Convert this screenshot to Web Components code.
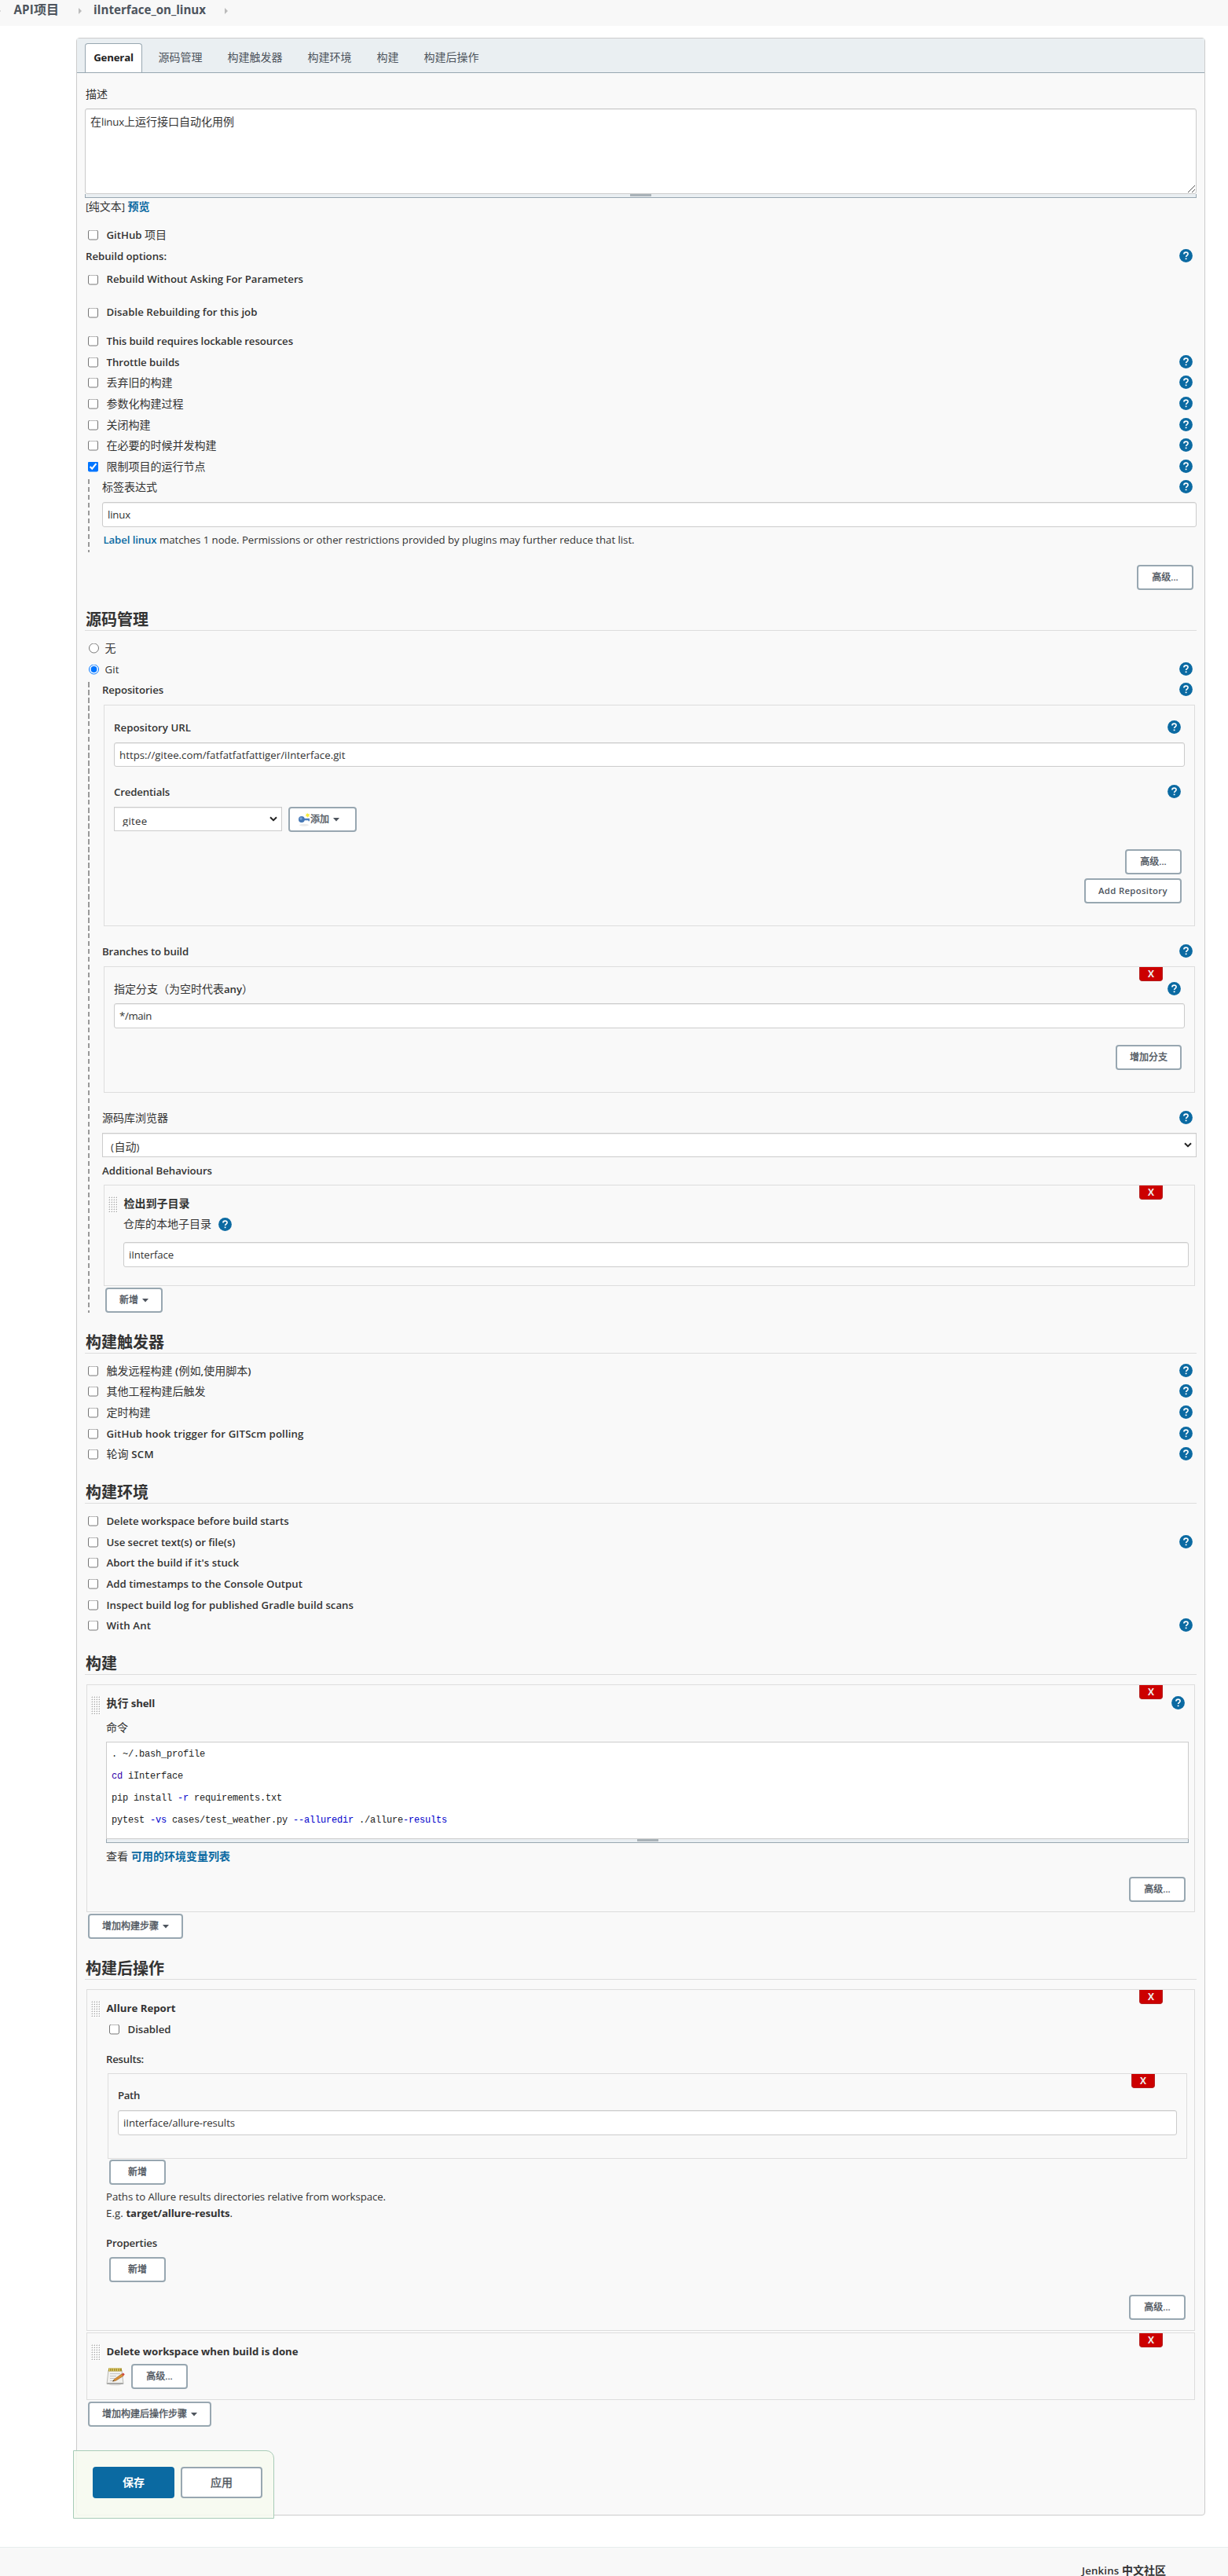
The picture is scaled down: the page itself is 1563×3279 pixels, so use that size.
<!DOCTYPE html>
<html lang="zh-CN">
<head>
<meta charset="utf-8">
<title>iInterface_on_linux Config</title>
<style>
html,body{margin:0;padding:0;background:#fff}
body{width:1563px;height:3279px;overflow:hidden;color:#333;font-family:"Open Sans","Noto Sans CJK SC",sans-serif;font-size:14px;line-height:20px}
</style>
</head>
<body>
<job-config></job-config>
<script>
const define = (name, css, html, init) => customElements.define(name, class extends HTMLElement {
  connectedCallback() {
    if (this.shadowRoot) return;
    const mt = this.getAttribute('mt'), h = this.getAttribute('h'), wd = this.getAttribute('wd');
    if (mt) this.style.marginTop = mt + 'px';
    if (h) this.style.height = h + 'px';
    if (wd) this.style.width = wd + 'px';
    const root = this.attachShadow({ mode: 'open' });
    root.innerHTML = `<style>*{box-sizing:border-box}:host{box-sizing:border-box}${css}</style>` +
      (typeof html === 'function' ? html(this) : html);
    if (init) init(this, root);
  }
});
const at = (e, n, d = '') => e.hasAttribute(n) ? e.getAttribute(n) : d;

/* Text run: Latin and CJK parts are set separately; w is the width of the whole run. */
define('t-x',
  `:host{display:inline-block;white-space:pre;flex:none;line-height:20px;margin-top:-1.5px}
   .l{font-size:var(--ls,13.2px);font-weight:400}
   .c{font-size:var(--cs,14px);font-weight:400}
   :host([semi]) .l{font-weight:600}
   :host([bold]) .l{font-weight:700}
   :host([bold]) .c,:host([cb]) .c{font-weight:700}
   :host([med]) .c{-webkit-text-stroke:.35px currentColor}
   :host([blue]){color:#0b6aa2}`,
  e => at(e, 's').split(/([\u3000-\u9fff\uff00-\uffef]+)/).filter(Boolean)
        .map(p => `<span class="${/[\u3000-\u9fff\uff00-\uffef]/.test(p) ? 'c' : 'l'}">${p}</span>`).join(''),
  (e, root) => {
    const z = +at(e, 'z', 14);
    e.style.setProperty('--cs', z + 'px');
    e.style.setProperty('--ls', (z * .945).toFixed(2) + 'px');
    const w = +at(e, 'w', 0);
    if (!w) return;
    let spans = [...root.querySelectorAll('.l')];
    if (!spans.length) spans = [...root.querySelectorAll('.c')];
    const n = spans.reduce((a, s) => a + s.textContent.length, 0);
    const ls = (w - e.getBoundingClientRect().width) / n;
    spans.forEach(s => s.style.letterSpacing = ls.toFixed(3) + 'px');
  });

define('help-icon', `:host{display:block;width:17px;height:17px;flex:none}svg{display:block}`,
  `<svg width="17" height="17" viewBox="0 0 17 17"><circle cx="8.5" cy="8.5" r="8.4" fill="#0b6aa2"/><path d="M5.9 6.6C5.9 4.9 7 4.1 8.5 4.1s2.6.9 2.6 2.2c0 1.7-2.5 1.9-2.5 3.8" fill="none" stroke="#fff" stroke-width="1.6"/><rect x="7.7" y="11.5" width="1.8" height="1.7" fill="#fff"/></svg>`);

define('j-row', `:host{display:flex;align-items:center;height:20px;white-space:pre}
  help-icon{margin-left:auto;margin-right:5.5px;margin-top:-2.5px}`,
  e => `<slot></slot>${e.hasAttribute('help') ? '<help-icon></help-icon>' : ''}`);

define('j-check', `:host{display:flex;align-items:center;height:20px}
  input{margin:0 0 0 4px;width:13px;height:13px;flex:none;transform:translateY(-1.5px)}
  :host([even]) input{transform:translateY(-.5px)}
  t-x{margin-left:10.5px}:host([radio]) t-x{margin-left:7.5px}
  :host([radio]) input{margin-left:5px}
  help-icon{margin-left:auto;margin-right:5.5px;margin-top:-2.5px}`,
  e => `<input type="${e.hasAttribute('radio') ? 'radio' : 'checkbox'}" ${e.hasAttribute('on') ? 'checked' : ''}><t-x ${e.hasAttribute('plain') ? '' : 'semi'} s="${at(e, 's')}" w="${at(e, 'w')}"></t-x>${e.hasAttribute('help') ? '<help-icon></help-icon>' : ''}`);

define('j-input', `:host{display:flex;align-items:center;height:32px;background:#fff;border:1px solid #ccc;border-radius:3px;box-shadow:inset 0 1px 1px rgba(0,0,0,.075);padding:2px 0 0 6px}`,
  e => `<t-x s="${at(e, 's')}" w="${at(e, 'w')}"></t-x>`);

define('j-select', `:host{display:flex;align-items:flex-start;justify-content:space-between;height:31px;background:#fff;border:1px solid #ccc;box-shadow:inset 0 1px 1px rgba(0,0,0,.075);padding:0 5px 0 10px}
  div{margin-top:7px;display:flex;align-items:flex-start;overflow:hidden}t-x{margin-top:0}svg{margin-top:11px}`,
  e => `<div style="height:${at(e, 'clip', 22)}px"><t-x s="${at(e, 's')}" w="${at(e, 'w')}"></t-x></div><svg width="10" height="7" viewBox="0 0 10 7"><path d="M1 1.2 5 5.2 9 1.2" fill="none" stroke="#222" stroke-width="2"/></svg>`);

define('j-btn', `:host{display:inline-flex;align-items:center;justify-content:center;height:32px;flex:none;background:#fff;border:2px solid #98a7b1;border-radius:4px;color:#4d545d}
  svg.d{margin-left:5px}:host([icon]){padding-right:9px}svg{flex:none}t-x{margin-top:-.5px}
  :host([primary]){background:#0b6aa2;border-color:#0b6aa2;color:#fff}`,
  e => (e.hasAttribute('icon') ? `<svg width="15" height="20" viewBox="0 0 15 20"><ellipse cx="7" cy="17.2" rx="6" ry="1.5" fill="#eaeaea"/><path d="M6 8.7h8v3.6h-1.6v-1H6z" fill="#4f7fbe"/><circle cx="3.9" cy="10" r="3.9" fill="#4577b5"/><circle cx="3" cy="9" r="1.7" fill="#7ba3d6"/><path d="M11.3 1.6l1 1.7 1.9-.3-1 1.7.9 1.8-1.9-.3-1 1.6-.8-1.8-1.8-.2 1.3-1.4-.6-1.8 1.9.6z" fill="#f7ec3c"/></svg>` : '') +
    `<t-x ${e.hasAttribute('primary') ? 'bold' : 'semi med'} z="${at(e, 'z', 12)}" s="${at(e, 's')}" w="${at(e, 'w')}"></t-x>` +
    (e.hasAttribute('drop') ? '<svg class="d" width="8" height="5" viewBox="0 0 8 5"><path d="M0 0h8L4 4.6z" fill="#4d545d"/></svg>' : ''));

define('j-btns', `:host{display:flex;height:32px;justify-content:flex-end;padding-right:4px}`, `<slot></slot>`);

define('j-head', `:host{display:flex;align-items:center;height:29px;border-bottom:1px solid #ddd}t-x{margin-left:1px;margin-top:3.5px}`,
  e => `<t-x bold z="20" s="${at(e, 's')}"></t-x>`);

define('j-nest', `:host{display:flex;flex-direction:column;margin-left:4px;padding-left:18px;background:repeating-linear-gradient(#999 0 6.5px,transparent 6.5px 10px) 0 0/2px 100% no-repeat}`, `<slot></slot>`);

define('j-box', `:host{display:flex;flex-direction:column;position:relative;margin:0 2px;border:1px solid #ddd;padding:0 12px}
  :host([drag]){padding:0 7px 0 24px}
  b{position:absolute;right:40px;top:0;width:30px;height:18px;background:#c00;border:1px solid #b52020;border-top:0;border-radius:0 0 4px 4px;display:flex;justify-content:center;align-items:center;color:#eee;font:700 12px/17px "Open Sans",sans-serif}`,
  e => `${e.hasAttribute('del') ? '<b>X</b>' : ''}<slot></slot>`);

define('j-title', `:host{display:flex;align-items:center;height:20px}
  svg{margin:0 7.5px 0 -19px;flex:none;align-self:flex-start}
  help-icon{margin-left:auto;margin-right:5.5px;margin-top:-2.5px}`,
  e => { const h = +at(e, 'grip', 21); let d = '';
    for (let y = 0; y < h - 1; y += 3) for (let x = 0; x < 12; x += 3) d += `<path d="M${x + 1} ${y + 1}h1v1h-1z" fill="#aaa"/><path d="M${x} ${y + 1}h1v1h-1zM${x + 1} ${y}h1v1h-1z" fill="#d8d8d8"/>`;
    return `<svg width="12" height="${h}" viewBox="0 0 12 ${h}"><rect width="12" height="${h}" fill="#fff" opacity=".7"/>${d}</svg><t-x bold s="${at(e, 's')}" w="${at(e, 'w')}"></t-x>${e.hasAttribute('help') ? '<help-icon></help-icon>' : ''}`; });

define('j-area', `:host{display:flex;flex-direction:column}
  .a{flex:1;background:#fff;border:1px solid #ccc;display:flex;flex-direction:column;align-items:flex-start;padding:7px 6px}
  :host([round]) .a{border-radius:3px;box-shadow:inset 0 1px 1px rgba(0,0,0,.075)}
  .s{flex:1}.z{align-self:flex-end;margin:0 -5px -6px 0;display:block}
  .g{height:5px;background:#eaeff2;border:1px solid #98a7b1;border-top:0;display:flex;justify-content:center}
  .g i{width:27px;height:3px;margin-top:0;background:#a9b2b8}`,
  e => `<div class="a"><slot></slot><div class="s"></div>${e.hasAttribute('round') ? '<svg class="z" width="9" height="9" viewBox="0 0 9 9"><path d="M0 9 9 0M5 9 9 5" stroke="#555" stroke-width="1" fill="none"/></svg>' : ''}</div><div class="g"><i></i></div>`);

define('code-line', `:host{display:block;height:28px;line-height:28px;white-space:pre;font-family:"Liberation Mono",monospace;font-size:12px;letter-spacing:-.2px;color:#222}::slotted(i){font-style:normal;color:#00c}::slotted(u){text-decoration:none;color:#30a}`, `<slot></slot>`);

define('note-icon', `:host{display:block;width:24px;height:24px;margin-right:8px}`,
  `<svg width="24" height="24" viewBox="0 0 24 24"><ellipse cx="11.5" cy="22" rx="8" ry="1.6" fill="#ddd"/><path d="M3 4h17l2 17.5H1z" fill="#f1f1ef" stroke="#b9b9b5"/><path d="M1.5 20h20l.2 2H1z" fill="#a9a9a7"/><path d="M3 1.5h17v4H3z" fill="#a8922f"/><path d="M4.500 1v4M7 1v4M9.500 1v4M12 1v4M14.500 1v4M17 1v4" stroke="#e0cf72"/><path d="M5 8.500h13M5 11.500h8M5 14.500h6M5 17.500h5" stroke="#c6c6c6"/><path d="M10.500 15.500 20 8.800l2 2.500-9.500 6-4 .9z" fill="#dc9135" stroke="#94581c" stroke-width=".6"/><path d="M20 8.800l2.200-1.300 1.500 2.100-1.700 1.700z" fill="#d2453e"/><path d="M8.500 18.200l1.200-1.600.8 1.100z" fill="#333"/></svg>`);

define('crumb-bar', `:host{display:flex;align-items:center;height:33px;background:#f8f8f8;color:#4d545d;padding-bottom:6px}
  svg{flex:none}`,
  (() => { const a = (l) => `<svg style="margin-left:${l}px" width="4" height="8" viewBox="0 0 4 8"><path d="M0 0 4 4 0 8z" fill="#bbb"/></svg>`;
    return `${a(-3)}<t-x style="margin-left:16.500px" bold z="16" s="API项目" w="57.500"></t-x>${a(25)}<t-x style="margin-left:15px" bold z="16" s="iInterface_on_linux" w="143"></t-x>${a(24)}`; })());

define('tab-bar', `:host{display:flex;height:44px;background:#eaeff2;border-bottom:1px solid #98a7b1;padding:6px 0 0 10px;color:#4d545d}
  .on{height:37px;width:73px;border:1px solid #98a7b1;border-bottom:0;border-radius:4px 4px 0 0;background:#fff;color:#222;display:flex;align-items:center;justify-content:center;margin-right:20.500px}
  .o{display:flex;align-items:center;gap:32px;height:38px}`,
  `<div class="on"><t-x bold s="General" w="50.500"></t-x></div><div class="o">${['源码管理', '构建触发器', '构建环境', '构建', '构建后操作'].map(t => `<t-x s="${t}"></t-x>`).join('')}</div>`);

define('save-bar', `:host{display:flex;position:relative;margin-left:-15px;width:256px;height:87px;background:rgba(246,249,239,.88);border:1px solid #a8ccb8;border-radius:0 10px 0 0;padding:20px 0 0 24px;gap:8px}
  j-btn{height:40px}`, `<j-btn primary z="14" wd="104" s="保存"></j-btn><j-btn z="14" wd="104" s="应用"></j-btn>`);

define('page-foot', `:host{display:flex;height:37px;margin-top:40px;background:#f8f8f8;border-top:1px solid #e6eded;justify-content:flex-end;align-items:flex-start;padding:19px 79px 0 0;overflow:hidden}t-x{margin-top:0}`,
  `<t-x semi s="Jenkins " w="51"></t-x><t-x bold s="中文社区"></t-x>`);

define('job-config', `:host{display:block}
  main{display:flex;flex-direction:column;margin:15px 0 0 97px;width:1437px;height:3154px;border:1px solid #ccc;border-radius:4px;background:#f9f9f9}
  .b{display:flex;flex-direction:column;padding:0 10px}
  .r{display:flex;height:32px}
  .left{align-self:flex-start;margin-left:4px}`,
`<crumb-bar></crumb-bar>
<main>
<tab-bar></tab-bar>
<div class="b">
  <j-row mt="18"><t-x style="margin-left:1px" s="描述"></t-x></j-row>
  <j-area round mt="7" h="114"><t-x s="在linux上运行接口自动化用例" w="183"></t-x></j-area>
  <j-row mt="2"><t-x style="margin-left:1px" s="[纯文本]" w="49.500"></t-x><t-x style="margin-left:4px" bold blue s="预览"></t-x></j-row>
  <j-check mt="16" s="GitHub 项目" w="76.500"></j-check>
  <j-row mt="7" help><t-x style="margin-left:1px" semi s="Rebuild options:" w="103"></t-x></j-row>
  <j-check mt="9" even s="Rebuild Without Asking For Parameters" w="250.500"></j-check>
  <j-check mt="22" even s="Disable Rebuilding for this job" w="192"></j-check>
  <j-check mt="17" s="This build requires lockable resources" w="237.500"></j-check>
  <j-check mt="7" help s="Throttle builds" w="93"></j-check>
  <j-check mt="6" help s="丢弃旧的构建"></j-check>
  <j-check mt="7" help s="参数化构建过程"></j-check>
  <j-check mt="7" help s="关闭构建"></j-check>
  <j-check mt="6" help s="在必要的时候并发构建"></j-check>
  <j-check mt="7" help on s="限制项目的运行节点"></j-check>
  <j-nest mt="5" h="93">
    <j-row mt="1" help><t-x s="标签表达式"></t-x></j-row>
    <j-input mt="8" s="linux" w="29"></j-input>
    <j-row mt="7"><t-x style="margin-left:1.500px" semi blue s="Label linux" w="68"></t-x><t-x s=" matches 1 node. Permissions or other restrictions provided by plugins may further reduce that list." w="608"></t-x></j-row>
  </j-nest>
  <j-btns mt="16"><j-btn wd="72" s="高级..."></j-btn></j-btns>

  <j-head mt="23" s="源码管理"></j-head>
  <j-check radio plain mt="13" s="无"></j-check>
  <j-check radio plain mt="7" on help s="Git" w="18"></j-check>
  <j-nest mt="5" h="803">
    <j-row mt="1" help><t-x semi s="Repositories" w="78"></t-x></j-row>
    <j-box mt="8" h="282">
      <j-row mt="19" help><t-x semi s="Repository URL" w="98"></t-x></j-row>
      <j-input mt="8" h="31" s="https://gitee.com/fatfatfatfattiger/iInterface.git" w="287.500"></j-input>
      <j-row mt="23" help><t-x semi s="Credentials" w="71"></t-x></j-row>
      <div class="r" style="margin-top:8px;gap:8px"><j-select clip="17" wd="214" s="gitee" w="31.500"></j-select><j-btn icon drop wd="87" s="添加"></j-btn></div>
      <j-btns mt="22"><j-btn wd="72" s="高级..."></j-btn></j-btns>
      <j-btns mt="5"><j-btn wd="124" s="Add Repository" w="88"></j-btn></j-btns>
    </j-box>
    <j-row mt="23" help><t-x semi s="Branches to build" w="110"></t-x></j-row>
    <j-box del mt="8" h="161">
      <j-row mt="19" help><t-x semi s="指定分支（为空时代表any）" w="177"></t-x></j-row>
      <j-input mt="7" s="*/main" w="41"></j-input>
      <j-btns mt="21"><j-btn wd="84" s="增加分支"></j-btn></j-btns>
    </j-box>
    <j-row mt="23" help><t-x s="源码库浏览器"></t-x></j-row>
    <j-select mt="8" s="(自动)" w="37"></j-select>
    <j-row mt="8"><t-x semi s="Additional Behaviours" w="140"></t-x></j-row>
    <j-box drag del mt="7" h="129">
      <j-title mt="14" s="检出到子目录"></j-title>
      <j-row mt="6"><t-x s="仓库的本地子目录"></t-x><help-icon style="margin-left:9px;margin-top:-2px"></help-icon></j-row>
      <j-input mt="12" s="iInterface" w="57"></j-input>
    </j-box>
    <j-btn class="left" mt="2" wd="73" drop s="新增"></j-btn>
  </j-nest>

  <j-head mt="23" s="构建触发器"></j-head>
  <j-check mt="13" help s="触发远程构建 (例如,使用脚本)" w="184"></j-check>
  <j-check mt="6" help s="其他工程构建后触发"></j-check>
  <j-check mt="7" help s="定时构建"></j-check>
  <j-check mt="7" help s="GitHub hook trigger for GITScm polling" w="251"></j-check>
  <j-check mt="6" help s="轮询 SCM" w="60.500"></j-check>

  <j-head mt="23" s="构建环境"></j-head>
  <j-check mt="13" s="Delete workspace before build starts" w="232"></j-check>
  <j-check mt="7" help s="Use secret text(s) or file(s)" w="164"></j-check>
  <j-check mt="6" s="Abort the build if it's stuck" w="168.500"></j-check>
  <j-check mt="7" s="Add timestamps to the Console Output" w="249.500"></j-check>
  <j-check mt="7" s="Inspect build log for published Gradle build scans" w="314.500"></j-check>
  <j-check mt="6" help s="With Ant" w="56.500"></j-check>

  <j-head mt="23" s="构建"></j-head>
  <j-box drag del mt="12" h="290">
    <j-title mt="14" grip="24" help s="执行 shell" w="61.500"></j-title>
    <j-row mt="11"><t-x s="命令"></t-x></j-row>
    <j-area mt="7" h="129"><div style="margin-top:-6px">
      <code-line>. ~/.bash_profile</code-line><code-line><u>cd</u> iInterface</code-line><code-line>pip install <i>-r</i> requirements.txt</code-line><code-line>pytest <i>-vs</i> cases/test_weather.py <i>--alluredir</i> ./allure<i>-results</i></code-line></div></j-area>
    <j-row mt="8"><t-x s="查看 " w="32"></t-x><t-x blue cb s="可用的环境变量列表"></t-x></j-row>
    <j-btns mt="15"><j-btn wd="72" s="高级..."></j-btn></j-btns>
  </j-box>
  <j-btn class="left" mt="2" wd="121" drop s="增加构建步骤"></j-btn>

  <j-head mt="23" s="构建后操作"></j-head>
  <j-box drag del mt="12" h="435">
    <j-title mt="14" s="Allure Report" w="88"></j-title>
    <j-check mt="7" s="Disabled" w="55"></j-check>
    <j-row mt="18"><t-x semi s="Results:" w="48"></t-x></j-row>
    <j-box del mt="7" h="109">
      <j-row mt="18"><t-x semi s="Path" w="28"></t-x></j-row>
      <j-input mt="8" s="iInterface/allure-results" w="142"></j-input>
    </j-box>
    <j-btn class="left" mt="1" wd="72" s="新增"></j-btn>
    <j-row mt="6"><t-x s="Paths to Allure results directories relative from workspace." w="356"></t-x></j-row>
    <j-row mt="1"><t-x s="E.g. " w="25.500"></t-x><t-x bold s="target/allure-results" w="132"></t-x><t-x s="."></t-x></j-row>
    <j-row mt="18"><t-x semi s="Properties" w="65"></t-x></j-row>
    <j-btn class="left" mt="7" wd="72" s="新增"></j-btn>
    <j-btns mt="16"><j-btn wd="72" s="高级..."></j-btn></j-btns>
  </j-box>
  <j-box drag del mt="2" h="86">
    <j-title mt="14" s="Delete workspace when build is done" w="244"></j-title>
    <div class="r" style="margin-top:5px;align-items:center"><note-icon></note-icon><j-btn wd="72" s="高级..."></j-btn></div>
  </j-box>
  <j-btn class="left" mt="2" wd="157" drop s="增加构建后操作步骤"></j-btn>
  <save-bar mt="30" ></save-bar>
</div>
</main>
<page-foot></page-foot>`);
</script>
</body>
</html>
